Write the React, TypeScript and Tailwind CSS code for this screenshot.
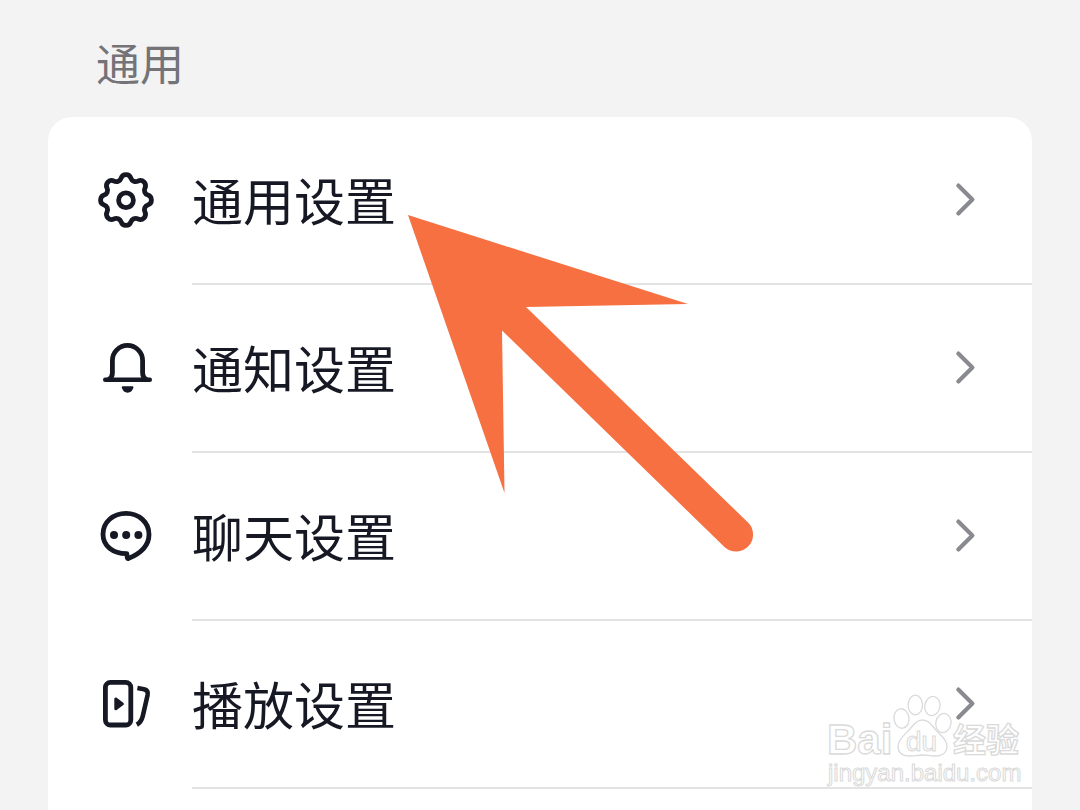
import type { ReactNode } from 'react'

// point of the gear outline, angle in degrees around (30, 30)
const gearPoint = (degrees: number) => {
    const angle = (degrees * Math.PI) / 180
    return `${(30 + 22.4 * Math.cos(angle)).toFixed(2)} ${(30 + 22.4 * Math.sin(angle)).toFixed(2)}`
}

// eight round lobes joined by shallow round notches
const gearPath =
    `M${gearPoint(-12.75)}` +
    Array.from({ length: 8 }, (_, i) => {
        const center = i * 45
        return `A5.2 5.2 0 0 1 ${gearPoint(center + 12.75)}A5 5 0 0 0 ${gearPoint(center + 32.25)}`
    }).join('') +
    'Z'

function Icon({ children }: { children: ReactNode }) {
    return (
        <svg
            viewBox="0 0 60 60"
            className="h-15 w-15 shrink-0"
            fill="none"
            stroke="currentColor"
            strokeWidth="4.8"
            strokeLinecap="round"
            strokeLinejoin="round"
            aria-hidden="true"
        >
            {children}
        </svg>
    )
}

function GearIcon() {
    return (
        <Icon>
            <path d={gearPath} />
            <circle cx="30" cy="30.2" r="7.4" />
        </Icon>
    )
}

function BellIcon() {
    return (
        <Icon>
            <path d="M9.2 41.8H53.8" strokeWidth="4.4" />
            <path d="M12.5 41.5C15.2 40 16.4 38 16.4 35V22.5a15.1 15.1 0 0 1 30.2 0V35C46.6 38 47.8 40 50.5 41.5" />
            <path d="M27 48.2H36.2C37.2 48.2 37.7 48.9 37.4 49.8C36.4 53 34.4 54.7 31.6 54.7S26.8 53 25.8 49.8C25.5 48.9 26 48.2 27 48.2Z" fill="currentColor" stroke="none" />
        </Icon>
    )
}

function ChatIcon() {
    return (
        <Icon>
            <path d="M30.8 47.6C17 47.8 7 39.8 7 28.2C7 16.2 17 7.4 30 7.4S53 16.4 53 28.4C53 40 44 47.6 32.2 52.6C31.4 52.8 31.2 51.6 31.2 51Z" />
            <g fill="currentColor" stroke="none">
                <circle cx="18" cy="28.9" r="4" />
                <circle cx="30.2" cy="28.9" r="4" />
                <circle cx="42.4" cy="28.9" r="4" />
            </g>
        </Icon>
    )
}

function PlaybackIcon() {
    return (
        <Icon>
            <rect x="9.4" y="8.4" width="25.4" height="42.6" rx="5" />
            <path d="M19.8 25V34.800L26.4 29.9Z" fill="currentColor" strokeWidth="3" />
            <path d="M41.4 14L48 15.2C51.4 16 52.2 18 51.6 21L46.8 42C45.8 46.2 44.6 48.6 40.8 50.6" strokeWidth="4.6" strokeLinecap="butt" />
        </Icon>
    )
}

function ChevronIcon() {
    return (
        <svg viewBox="0 0 36 36" className="h-9 w-9 shrink-0" fill="none" aria-hidden="true">
            <path d="M10.3 3.6L24.4 17.5L10.3 31.4" stroke="#8a8b90" strokeWidth="4.2" strokeLinecap="round" strokeLinejoin="round" />
        </svg>
    )
}

function PointerArrow() {
    return (
        <svg viewBox="0 0 346 338" className="pointer-events-none absolute top-[98px] left-[360px] h-[338px] w-[346px]" aria-hidden="true">
            <path d="M0 0L280 89L118 92L340.500 308A17 17 0 0 1 317 332.500L94 115.500L96.500 278Z" fill="#f67042" />
        </svg>
    )
}

function Watermark() {
    return (
        <svg
            viewBox="0 0 200 100"
            className="pointer-events-none absolute right-[54px] bottom-[20px] h-[100px] w-[200px]"
            fill="#ffffff"
            stroke="#dadada"
            strokeWidth="1.3"
            role="img"
            aria-label="Baidu 经验"
        >
            <g className="font-['Liberation_Sans','Noto_Sans_CJK_SC',sans-serif]">
                <text x="1" y="64" fontSize="42" fontWeight="700">Bai</text>
                <text x="127" y="62" fontSize="33" fontWeight="700">经验</text>
                <text x="2" y="91" fontSize="24" strokeWidth="1">jingyan.baidu.com</text>
            </g>
            <ellipse cx="75.500" cy="28.500" rx="7.500" ry="9.800" transform="rotate(-8 75.5 28.5)" />
            <ellipse cx="89.300" cy="15" rx="7.200" ry="9.800" />
            <ellipse cx="106.400" cy="16" rx="7.600" ry="9.600" transform="rotate(12 106.4 16)" />
            <ellipse cx="117.400" cy="33" rx="7.600" ry="9.600" transform="rotate(12 117.4 33)" />
            <path d="M96.500 30C102 30 105 34 109 39C113 44 121 49 121 56C121 63 115.500 66 109 66C104 66 101 65 96.500 65S88 66 84 66C76 66 72 62 72 56C72 49 79.500 44 84 39C88 34 91 30 96.500 30Z" />
            <text x="80" y="61" fontSize="28" strokeWidth="1" className="font-['Liberation_Sans',sans-serif]">du</text>
        </svg>
    )
}

const settings = [
    { label: '通用设置', icon: <GearIcon /> },
    { label: '通知设置', icon: <BellIcon /> },
    { label: '聊天设置', icon: <ChatIcon /> },
    { label: '播放设置', icon: <PlaybackIcon /> },
]

export default function App() {
    return (
        <main className="relative flex min-h-screen flex-col bg-[#f3f3f3] px-12 font-['Noto_Sans_CJK_SC',sans-serif] text-[#161823]">
            <h1 className="px-12 pt-8 pb-[25px] text-[44px] leading-[60px] font-normal text-[#737378]">通用</h1>

            <section className="relative flex-1 rounded-t-3xl bg-white">
                <ul>
                    {settings.map((item) => (
                        <li key={item.label}>
                            <button type="button" className="flex h-42 w-full items-stretch gap-9 pl-12 text-left">
                                <span className="flex items-center pb-0.5">{item.icon}</span>
                                <span className="flex flex-1 items-center justify-between border-b-2 border-[#e3e3e3] pr-12">
                                    <span className="pb-0.5 text-[51px] leading-[72px]">{item.label}</span>
                                    <ChevronIcon />
                                </span>
                            </button>
                        </li>
                    ))}
                </ul>
                <PointerArrow />
            </section>

            <Watermark />
        </main>
    )
}
